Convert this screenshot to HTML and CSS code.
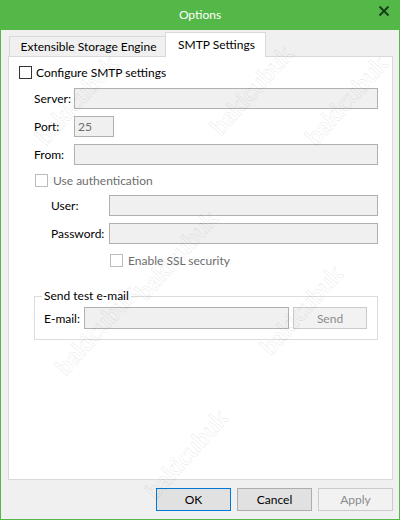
FILE: index.html
```html
<html>

<head>
	<title>Options</title>
	<link rel="stylesheet" href="styles.css">
</head>

<body>
	<div class="window">
		<div class="titlebar">
			<span></span>
			<span class="title">Options</span>
			<span class="close">
				<svg width="10" height="10" viewBox="0 0 10 10">
					<path d="M0.5 0.5 L9.5 9.5 M9.5 0.5 L0.5 9.5" stroke="#17401a" stroke-width="2" fill="none" />
				</svg>
			</span>
		</div>

		<div class="content">
			<div class="tabs">
				<div class="tab">Extensible Storage Engine</div>
				<div class="tab active">SMTP Settings</div>
			</div>

			<div class="panel">
				<label class="check-row configure">
					<span class="box"></span>
					<span>Configure SMTP settings</span>
				</label>

				<div class="field-row server">
					<span class="label">Server:</span>
					<span class="input"></span>
				</div>
				<div class="field-row">
					<span class="label">Port:</span>
					<span class="input port">25</span>
				</div>
				<div class="field-row">
					<span class="label">From:</span>
					<span class="input"></span>
				</div>

				<label class="check-row auth disabled">
					<span class="box"></span>
					<span>Use authentication</span>
				</label>

				<div class="field-row auth-field">
					<span class="label">User:</span>
					<span class="input"></span>
				</div>
				<div class="field-row auth-field">
					<span class="label">Password:</span>
					<span class="input"></span>
				</div>

				<label class="check-row ssl disabled">
					<span class="box"></span>
					<span>Enable SSL security</span>
				</label>

				<fieldset class="group">
					<legend>Send test e-mail</legend>
					<div class="email-row">
						<span class="label">E-mail:</span>
						<span class="input"></span>
						<button class="btn disabled">Send</button>
					</div>
				</fieldset>
			</div>

			<div class="buttons">
				<button class="btn default">OK</button>
				<button class="btn">Cancel</button>
				<button class="btn disabled">Apply</button>
			</div>
		</div>

		<div class="watermarks">
			<span class="mark m1">bakicubuk</span>
			<span class="mark m2">bakicubuk</span>
			<span class="mark m3">bakicubuk</span>
			<span class="mark m4">bakicubuk</span>
			<span class="mark m5">bakicubuk</span>
			<span class="mark m6">bakicubuk</span>
			<span class="mark m7">bakicubuk</span>
		</div>
	</div>
</body>

</html>
```

FILE: styles.css
```css
* {
	box-sizing: border-box;
	margin: 0;
	padding: 0;
}

body {
	font-family: Lato, "Noto Sans", sans-serif;
	font-size: 12px;
	color: #000;
	background: #f0f0f0;
}

.window {
	position: relative;
	width: 400px;
	height: 520px;
	background: #f0f0f0;
	border: 1px solid #53b848;
	border-top: none;
	overflow: hidden;
}

.titlebar {
	height: 30px;
	margin: 0 -1px;
	background: #53b848;
	display: grid;
	grid-template-columns: 1fr auto 1fr;
	align-items: center;
}

.titlebar .title {
	color: #fff;
	font-size: 12px;
	margin-top: -1px;
}

.titlebar .close {
	justify-self: end;
	display: flex;
	margin-right: 11px;
	margin-top: -9px;
}

.content {
	padding: 0 6px 0 7px;
}

/* tabs */

.tabs {
	display: flex;
	align-items: flex-end;
	height: 26px;
	padding-left: 1px;
	position: relative;
	z-index: 1;
}

.tab {
	height: 20px;
	width: 157px;
	border: 1px solid #d9d9d9;
	border-bottom: none;
	background: #f0f0f0;
	display: flex;
	align-items: center;
	justify-content: center;
	padding-left: 2px;
}

.tab.active {
	height: 25px;
	width: 101px;
	margin-left: -1px;
	margin-bottom: -1px;
	background: #fff;
	padding-bottom: 2px;
}

.panel {
	width: 385px;
	height: 424px;
	background: #fff;
	border: 1px solid #d9d9d9;
	display: flex;
	flex-direction: column;
}

/* checkboxes */

.check-row {
	display: flex;
	align-items: center;
	gap: 4px;
	height: 16px;
}

.check-row .box {
	width: 13px;
	height: 13px;
	border: 1px solid #333;
	background: #fff;
}

.check-row.disabled {
	color: #6d6d6d;
}

.check-row.disabled .box {
	border-color: #bcbcbc;
}

.configure {
	margin-top: 7px;
	padding-left: 10px;
}

.auth {
	margin-top: 7px;
	padding-left: 26px;
	gap: 5px;
}

.ssl {
	margin-top: 8px;
	padding-left: 101px;
	gap: 5px;
}

/* text fields */

.field-row {
	display: flex;
	align-items: center;
	margin-top: 7px;
	padding-left: 25px;
	padding-right: 14px;
}

.field-row.server {
	margin-top: 8px;
}

.field-row .label {
	width: 40px;
}

.field-row.auth-field {
	padding-left: 42px;
}

.field-row.auth-field .label {
	width: 58px;
}

.input {
	flex: 1;
	height: 21px;
	background: #f0f0f0;
	border: 1px solid #b1b1b1;
	color: #6d6d6d;
	padding-left: 3px;
	display: flex;
	align-items: center;
}

.input.port {
	flex: none;
	width: 40px;
}

/* group box */

.group {
	margin: 20px 14px 0 25px;
	border: 1px solid #dcdcdc;
	padding: 0 10px 10px 9px;
}

.group legend {
	margin-left: -2px;
	padding: 0 2px;
	line-height: 16px;
}

.email-row {
	display: flex;
	align-items: center;
	margin-top: 3px;
}

.email-row .label {
	width: 40px;
}

.email-row .input {
	height: 22px;
}

.email-row .btn {
	width: 74px;
	height: 22px;
	margin-left: 4px;
}

/* buttons */

.buttons {
	display: flex;
	justify-content: flex-end;
	gap: 6px;
	margin-top: 8px;
}

.btn {
	width: 75px;
	height: 23px;
	font-family: inherit;
	font-size: 12px;
	color: #000;
	background: #e1e1e1;
	border: 1px solid #adadad;
}

.btn.default {
	border-color: #0078d7;
}

.btn.disabled {
	background: #f2f2f2;
	border-color: #cbcbcb;
	color: #8b8b8b;
}

/* watermark */

.watermarks {
	position: absolute;
	inset: 0;
	pointer-events: none;
}

.mark {
	position: absolute;
	width: 120px;
	height: 28px;
	line-height: 28px;
	text-align: center;
	font-size: 24px;
	font-weight: bold;
	color: rgba(255, 255, 255, 0);
	-webkit-text-stroke: 1px rgba(0, 0, 0, 0.07);
	transform: rotate(-48deg);
}

.m1 { left: 15px; top: 86px; }
.m2 { left: 190px; top: 76px; }
.m3 { left: 285px; top: 86px; }
.m4 { left: 115px; top: 241px; }
.m5 { left: 35px; top: 316px; }
.m6 { left: 240px; top: 296px; }
.m7 { left: 125px; top: 440px; }
```
